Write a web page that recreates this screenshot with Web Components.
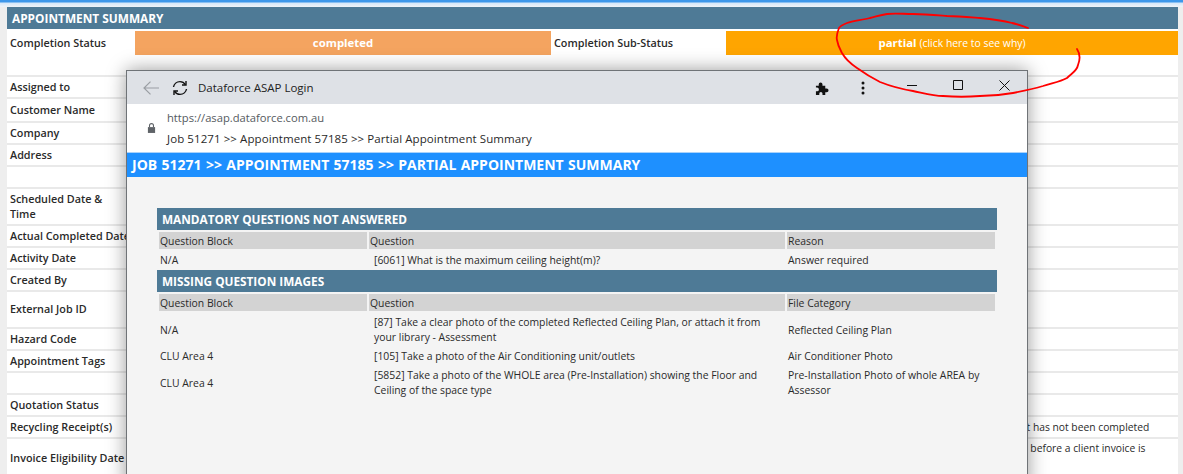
<!DOCTYPE html>
<html>
<head>
<meta charset="utf-8">
<title>Appointment Summary</title>
<style>
html, body { margin: 0; height: 100%; overflow: hidden; background: #fff; }
body { font: 10.8px/15px "Open Sans", "Liberation Sans", sans-serif; color: #2a2a2a; }
</style>
</head>
<body>
<appt-page>
  <appt-summary>
    <appt-status></appt-status>
    <appt-row height="22" first></appt-row>
    <appt-row height="22" label="Assigned to"></appt-row>
    <appt-row height="24" label="Customer Name"></appt-row>
    <appt-row height="22" label="Company"></appt-row>
    <appt-row height="22" label="Address"></appt-row>
    <appt-row height="22"></appt-row>
    <appt-row height="37" label="Scheduled Date &amp; Time"></appt-row>
    <appt-row height="22" label="Actual Completed Date" nowrap></appt-row>
    <appt-row height="22" label="Activity Date"></appt-row>
    <appt-row height="22" label="Created By"></appt-row>
    <appt-row height="37" label="External Job ID"></appt-row>
    <appt-row height="22" label="Hazard Code"></appt-row>
    <appt-row height="22" label="Appointment Tags"></appt-row>
    <appt-row height="22"></appt-row>
    <appt-row height="22" label="Quotation Status"></appt-row>
    <appt-row height="22" label="Recycling Receipt(s)" note="Recycling receipt has not been completed" indent="830" nowrap></appt-row>
    <appt-row height="40" label="Invoice Eligibility Date" note="Must be completed before a client invoice is" indent="815" nowrap top></appt-row>
  </appt-summary>
  <appt-popup>
    <appt-section title="Mandatory Questions Not Answered" third="Reason">
      <appt-answer block="N/A" reason="Answer required">[6061] What is the maximum ceiling height(m)?</appt-answer>
    </appt-section>
    <appt-section title="Missing Question Images" third="File Category" spaced>
      <appt-answer block="N/A" reason="Reflected Ceiling Plan">[87] Take a clear photo of the completed Reflected Ceiling Plan, or attach it from your library - Assessment</appt-answer>
      <appt-answer block="CLU Area 4" reason="Air Conditioner Photo">[105] Take a photo of the Air Conditioning unit/outlets</appt-answer>
      <appt-answer block="CLU Area 4" reason="Pre-Installation Photo of whole AREA by Assessor">[5852] Take a photo of the WHOLE area (Pre-Installation) showing the Floor and Ceiling of the space type</appt-answer>
    </appt-section>
  </appt-popup>
  <appt-scribble></appt-scribble>
</appt-page>

<script>
class AppPage extends HTMLElement {
  constructor() {
    super();
    this.attachShadow({ mode: 'open' }).innerHTML = `
<style>
:host { display: block; position: relative; height: 474px; overflow: hidden; background: #eeeeee; }
.top { height: 7px; background: linear-gradient(#3d97ea 0, #3d97ea 2px, #d5e7f9 3px, #f0f4f8 7px); }
.main { padding: 0 5px 0 7px; }
</style>
<div class="top"></div>
<div class="main"><slot></slot></div>`;
  }
}

class AppSummary extends HTMLElement {
  constructor() {
    super();
    this.attachShadow({ mode: 'open' }).innerHTML = `
<style>
:host { display: block; background: #fff; }
.head {
  height: 22px; line-height: 22px; padding-left: 5px; margin-bottom: 2px;
  background: #4e7a96; color: #fff; font-size: 11.85px; font-weight: 700;
}
</style>
<div class="head">APPOINTMENT SUMMARY</div>
<slot></slot>`;
  }
}

class AppStatus extends HTMLElement {
  constructor() {
    super();
    this.attachShadow({ mode: 'open' }).innerHTML = `
<style>
:host { display: grid; grid-template-columns: 128px 416px 175px 452px; height: 22px; line-height: 24px; }
b { padding-left: 3px; font-weight: 600; }
.val { text-align: center; color: #fff; font-weight: 700; font-size: 11.4px; }
.done { background: #f4a460; }
.part { background: #ffa500; }
.part span { font-weight: 400; font-size: 10.4px; }
</style>
<b>Completion Status</b>
<div class="val done">completed</div>
<b>Completion Sub-Status</b>
<div class="val part">partial <span>(click here to see why)</span></div>`;
  }
}

class AppRow extends HTMLElement {
  connectedCallback() {
    const label = this.getAttribute('label') || '';
    const note = this.getAttribute('note') || '';
    const h = this.getAttribute('height') || 22;
    const indent = this.getAttribute('indent') || 0;
    const border = this.hasAttribute('first') ? 'none' : '2px solid #e9e9e9';
    this.attachShadow({ mode: 'open' }).innerHTML = `
<style>
:host { display: flex; align-items: center; box-sizing: border-box; height: ${h}px; border-top: ${border}; padding-bottom: 2px; }
.label { flex: none; width: 110px; padding-left: 3px; font-weight: 600; }
.nowrap { white-space: nowrap; }
.note { margin: 2px 0 0 ${indent}px; white-space: nowrap; font-size: 10.3px; }
:host([top]) .note { align-self: flex-start; margin-top: 0; padding-top: 2px; }
</style>
<div class="label ${this.hasAttribute('nowrap') ? 'nowrap' : ''}">${label}</div>
<div class="note">${note}</div>`;
  }
}

class AppPopup extends HTMLElement {
  constructor() {
    super();
    this.attachShadow({ mode: 'open' }).innerHTML = `
<style>
:host {
  display: flex; flex-direction: column; position: absolute; left: 126px; top: 70px; width: 900px; height: 420px;
  border: 1px solid #6f7377; background: #f4f4f4; box-shadow: 0 0 18px rgba(0,0,0,.4); font-size: 10.4px;
}
.bar { display: flex; align-items: center; height: 33px; background: #dee1e6; color: #222; font-size: 11.5px; flex: none; }
.bar svg { flex: none; display: block; }
.back { margin-left: 16px; }
.reload { margin-left: 13px; }
.name { margin-left: 10px; flex: 1; }
.puzzle { margin-right: 32px; }
.more { margin-right: 42px; }
.min { margin-right: 36px; margin-bottom: 5px; }
.max { margin-right: 36px; margin-bottom: 5px; }
.close { margin-right: 17px; margin-bottom: 5px; }
.addr { display: flex; height: 48px; background: #fff; flex: none; }
.lock { margin: 18px 0 0 20px; }
.addr div { margin-left: 11px; padding-top: 4px; line-height: 20.5px; font-size: 11.5px; letter-spacing: .08px; }
.url { color: #555a60; font-size: 11.2px; letter-spacing: 0; }
.blue {
  flex: none; height: 24px; line-height: 24px; padding-left: 5px; border-top: 1px solid #a9d2fb;
  background: #1e90ff; color: #fff; font-size: 14px; font-weight: 700; word-spacing: .7px;
}
.body { padding: 31px 30px 0; }
</style>
<div class="bar">
  <svg class="back" width="16" height="14" viewBox="0 0 16 14" fill="none" stroke="#9a9ea3" stroke-width="1.2"><path d="M16 7H1.500M7.500 .6 1 7l6.500 6.400"/></svg>
  <svg class="reload" width="16" height="16" viewBox="0 0 16 16" fill="none" stroke="#111" stroke-width="1.4"><path d="M1.500 7C2 4 4.600 1.600 8 1.600c2.400 0 4.300 1.200 5.400 3"/><path d="M14 1v4h-4"/><path d="M14.500 9c-.5 3-3.100 5.400-6.500 5.400-2.400 0-4.300-1.200-5.400-3"/><path d="M2 15v-4h4"/></svg>
  <span class="name">Dataforce ASAP Login</span>
  <svg class="puzzle" width="14" height="14" viewBox="0 0 15 15" fill="#111"><path d="M1 5h3V3.500a2 2 0 0 1 4 0V5h3v3h1.500a2 2 0 0 1 0 4H11v3H8v-1.500a1.700 1.700 0 0 0-3.400 0V15H1v-4h1.200a2 2 0 0 0 0-4H1z"/></svg>
  <svg class="more" width="4" height="14" viewBox="0 0 4 14" fill="#111"><circle cx="2" cy="2" r="1.500"/><circle cx="2" cy="7" r="1.500"/><circle cx="2" cy="12" r="1.500"/></svg>
  <svg class="min" width="10" height="10" viewBox="0 0 10 10" stroke="#111"><path d="M0 5.500h10"/></svg>
  <svg class="max" width="10" height="10" viewBox="0 0 10 10" fill="none" stroke="#111"><path d="M.5.500h9v9h-9z"/></svg>
  <svg class="close" width="11" height="11" viewBox="0 0 11 11" stroke="#111"><path d="M.5.500l10 10M10.500.500l-10 10"/></svg>
</div>
<div class="addr">
  <svg class="lock" width="9" height="12" viewBox="0 0 10 12" fill="#5f6368"><path d="M1 5h8v6.500H1z"/><path d="M2.800 5V3.300a2.200 2.200 0 0 1 4.400 0V5" fill="none" stroke="#5f6368" stroke-width="1.200"/></svg>
  <div><span class="url">https://asap.dataforce.com.au</span><br>Job 51271 &gt;&gt; Appointment 57185 &gt;&gt; Partial Appointment Summary</div>
</div>
<div class="blue">JOB 51271 &gt;&gt; APPOINTMENT 57185 &gt;&gt; PARTIAL APPOINTMENT SUMMARY</div>
<div class="body"><slot></slot></div>`;
  }
}

class AppSection extends HTMLElement {
  connectedCallback() {
    const title = this.getAttribute('title');
    this.removeAttribute('title');
    const third = this.getAttribute('third');
    this.attachShadow({ mode: 'open' }).innerHTML = `
<style>
:host { display: block; width: 840px; }
:host([spaced]) { margin-top: 2px; }
.head {
  height: 22px; line-height: 22px; padding-left: 5px; background: #4e7a96;
  color: #fff; font-size: 11.8px; font-weight: 700; text-transform: uppercase;
}
.cols { display: grid; grid-template-columns: 208px 416px 208px; gap: 2px; margin: 2px 2px 0; }
.cols div { height: 17px; line-height: 19px; padding-left: 1px; background: #d3d3d3; }
</style>
<div class="head">${title}</div>
<div class="cols"><div>Question Block</div><div>Question</div><div>${third}</div></div>
<slot></slot>`;
  }
}

class AppAnswer extends HTMLElement {
  connectedCallback() {
    this.attachShadow({ mode: 'open' }).innerHTML = `
<style>
:host { display: grid; grid-template-columns: 208px 416px 208px; gap: 2px; margin: 2px 2px 0; align-items: center; padding: 2px 0 0; }
.b, .r { padding-left: 1px; }
.q { padding-left: 5px; padding-right: 20px; }
</style>
<div class="b">${this.getAttribute('block')}</div>
<div class="q"><slot></slot></div>
<div class="r">${this.getAttribute('reason')}</div>`;
  }
}

class AppScribble extends HTMLElement {
  constructor() {
    super();
    this.attachShadow({ mode: 'open' }).innerHTML = `
<style>
:host { position: absolute; inset: 0; pointer-events: none; }
svg { display: block; }
</style>
<svg width="1183" height="474" fill="none" stroke="#f00" stroke-width="1.8" stroke-linecap="round" stroke-linejoin="round">
  <path d="M1028 28C1022 26 1017 24 1012 23 1000 20 990 19 980 18 968 17 958 16 947 16 935 15 925 14 913 14 903 14 895 13 887 14 880 15 875 17 870 18 862 20 853 21 847 23 842 25 840 26 839 28 837 33 836 36 837 40 838 46 840 49 842 53 846 60 851 64 857 68 864 73 872 78 880 82 890 86 901 89 913 91 923 93 933 96 943 96 955 97 968 97 980 96 992 96 1002 95 1013 93 1023 91 1033 89 1043 86 1052 83 1060 82 1067 78 1072 73 1077 71 1078 65 1080 60 1081 55 1077 49"/>
</svg>`;
  }
}

customElements.define('appt-page', AppPage);
customElements.define('appt-summary', AppSummary);
customElements.define('appt-status', AppStatus);
customElements.define('appt-row', AppRow);
customElements.define('appt-popup', AppPopup);
customElements.define('appt-section', AppSection);
customElements.define('appt-answer', AppAnswer);
customElements.define('appt-scribble', AppScribble);
</script>
</body>
</html>
